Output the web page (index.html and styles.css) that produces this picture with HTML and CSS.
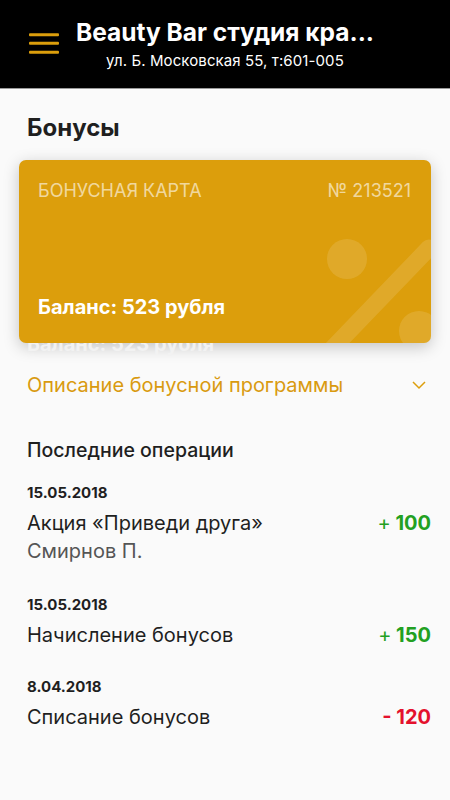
FILE: index.html
```html
<!DOCTYPE html>
<html lang="ru">
<head>
<meta charset="utf-8">
<link rel="stylesheet" href="styles.css">
</head>
<body>
<header class="topbar">
  <button class="burger" aria-label="Меню">
    <svg width="30" height="22" viewBox="0 0 30 22"><rect x="0" y="0.2" width="30" height="3" rx="1" fill="#DC9E0C"/><rect x="0" y="8.8" width="30" height="3" rx="1" fill="#DC9E0C"/><rect x="0" y="17.8" width="30" height="3" rx="1" fill="#DC9E0C"/></svg>
  </button>
  <div class="titles">
    <div class="title">Beauty Bar студия кра...</div>
    <div class="subtitle">ул. Б. Московская 55, т:601-005</div>
  </div>
</header>
<main class="content">
  <h1 class="page-title">Бонусы</h1>
  <div class="card">
    <svg class="card-deco" width="120" height="130" viewBox="0 0 120 130">
      <circle cx="36" cy="46" r="20" fill="rgba(255,255,255,0.12)"/>
      <circle cx="108" cy="118" r="20" fill="rgba(255,255,255,0.12)"/>
      <line x1="19" y1="138" x2="118" y2="35" stroke="rgba(255,255,255,0.12)" stroke-width="17" stroke-linecap="round"/>
    </svg>
    <div class="card-top">
      <span>БОНУСНАЯ КАРТА</span>
      <span>№ 213521</span>
    </div>
    <div class="card-balance">Баланс: 523 рубля</div>
  </div>
  <div class="ghost"><div class="ghost-text">Баланс: 523 рубля</div></div>
  <div class="accordion">
    <span>Описание бонусной программы</span>
    <svg width="14" height="9" viewBox="0 0 14 9"><polyline points="1,1 7,7 13,1" fill="none" stroke="#DC9E0C" stroke-width="1.5"/></svg>
  </div>
  <h2 class="ops-title">Последние операции</h2>
  <div class="op">
    <div class="op-date">15.05.2018</div>
    <div class="op-row">
      <div class="op-name">Акция «Приведи друга»<div class="op-sub">Смирнов П.</div></div>
      <div class="op-amount plus"><span class="sign">+</span> 100</div>
    </div>
  </div>
  <div class="op">
    <div class="op-date">15.05.2018</div>
    <div class="op-row">
      <div class="op-name">Начисление бонусов</div>
      <div class="op-amount plus"><span class="sign">+</span> 150</div>
    </div>
  </div>
  <div class="op">
    <div class="op-date">8.04.2018</div>
    <div class="op-row">
      <div class="op-name">Списание бонусов</div>
      <div class="op-amount minus">- 120</div>
    </div>
  </div>
</main>
</body>
</html>
```
FILE: styles.css
```css
* { box-sizing: border-box; }
html, body { margin: 0; padding: 0; }
body {
  width: 450px;
  height: 800px;
  overflow: hidden;
  background: #fafafa;
  font-family: Inter, "Open Sans", "Liberation Sans", sans-serif;
  color: #1f1f1f;
}
.topbar {
  height: 89px;
  background: #000;
  border-bottom: 1px solid #9a9a9a;
  display: flex;
  align-items: center;
}
.burger {
  background: none;
  border: 0;
  padding: 0;
  margin: 0 0 0 29px;
  width: 30px;
  height: 22px;
  display: flex;
  flex: none;
}
.titles {
  flex: 1;
  align-self: flex-start;
  padding-top: 17px;
  margin-left: -59px;
  text-align: center;
  color: #fff;
}
.title {
  font-size: 24.5px;
  font-weight: 700;
  line-height: 30px;
}
.subtitle {
  font-size: 15px;
  line-height: 20px;
  margin-top: 4px;
  letter-spacing: 0.1px;
}
.content { padding: 0 19px; }
.page-title {
  margin: 24px 0 0 8px;
  font-size: 24px;
  font-weight: 700;
  line-height: 30px;
  color: #1f1f1f;
}
.card {
  position: relative;
  z-index: 1;
  margin-top: 17px;
  height: 183px;
  background: #dc9e0c;
  border-radius: 7px;
  box-shadow: 0 4px 16px rgba(0,0,0,0.22);
  overflow: hidden;
  padding: 20px 20px 24px 19px;
  display: flex;
  flex-direction: column;
  justify-content: space-between;
}
.card-deco { position: absolute; right: 0; bottom: 0; }
.card-top {
  display: flex;
  justify-content: space-between;
  font-size: 18px;
  line-height: 22px;
  color: rgba(255,255,255,0.62);
  position: relative;
}
.card-balance {
  font-size: 20px;
  font-weight: 700;
  color: #fff;
  line-height: 24px;
  position: relative;
}
.ghost {
  position: relative;
  z-index: 2;
  height: 13px;
  overflow: hidden;
  margin-left: 8px;
}
.ghost-text {
  margin-top: -11px;
  font-size: 20px;
  font-weight: 700;
  line-height: 24px;
  color: #f2f2f2;
}
.accordion {
  margin: 16px 0 0 8px;
  display: flex;
  justify-content: space-between;
  align-items: center;
  color: #d99a10;
  font-size: 20px;
  line-height: 26px;
  padding-right: 5px;
}
.ops-title {
  margin: 39px 0 0 8px;
  font-size: 19.5px;
  font-weight: 500;
  line-height: 26px;
}
.op { margin: 20px 0 0 8px; }
.op + .op { margin-top: 28px; }
.op-date {
  font-size: 15px;
  font-weight: 700;
  line-height: 20px;
}
.op-row {
  margin-top: 6px;
  display: flex;
  justify-content: space-between;
  align-items: flex-start;
  font-size: 20px;
  line-height: 28px;
}
.op-sub { color: #555; padding-bottom: 2px; }
.op-amount { font-weight: 700; }
.sign { font-weight: 400; }
.plus { color: #22a022; }
.minus { color: #e4112d; }
```
